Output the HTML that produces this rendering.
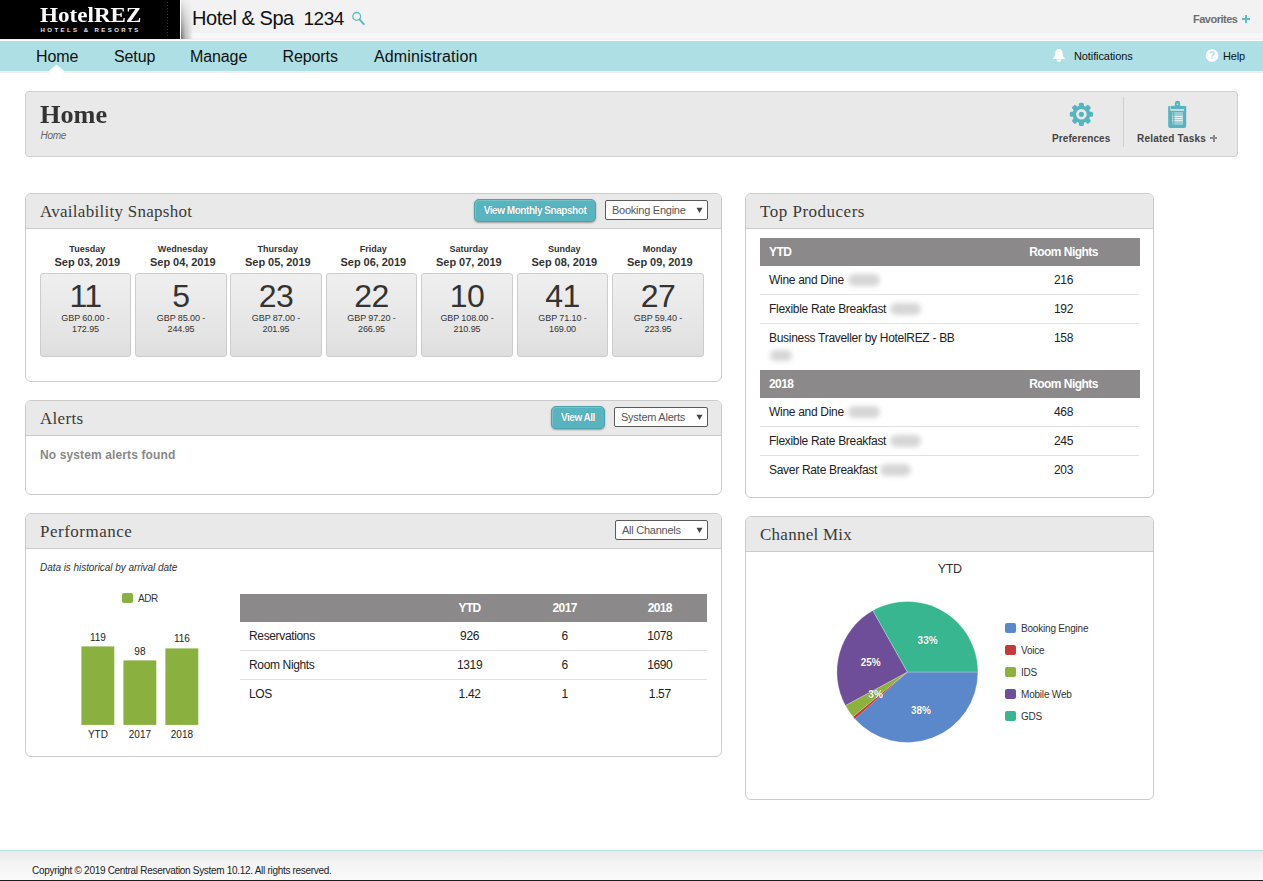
<!DOCTYPE html>
<html><head><meta charset="utf-8"><title>HotelREZ Home</title>
<style>
*{margin:0;padding:0}
html,body{width:1263px;height:881px;overflow:hidden;background:#fff;position:relative;font-family:"Liberation Sans",sans-serif}
</style></head><body>
<div style="position:absolute;left:0px;top:0px;width:1263px;height:33px;background:#f2f2f2"></div>
<div style="position:absolute;left:0px;top:33px;width:1263px;height:5px;background:#f7f7f7"></div>
<div style="position:absolute;left:0px;top:38px;width:1263px;height:2px;background:#f2f2f2"></div>
<div style="position:absolute;left:0px;top:40px;width:1263px;height:1px;background:#fff"></div>
<div style="position:absolute;left:180px;top:0px;width:1px;height:39px;background:#fff"></div>
<div style="position:absolute;left:181px;top:0px;width:12px;height:39px;background:linear-gradient(to right,rgba(0,0,0,.55),rgba(0,0,0,.25) 35%,rgba(0,0,0,0));-webkit-mask-image:linear-gradient(to bottom,rgba(0,0,0,.05),rgba(0,0,0,.5) 50%,#000)"></div>
<div style="position:absolute;left:0px;top:0px;width:180px;height:39px;background:#000"></div>
<div style="position:absolute;left:167px;top:2px;width:1px;height:35px;background:repeating-linear-gradient(#333 0,#333 1px,transparent 1px,transparent 3px)"></div>
<div style='position:absolute;left:40px;top:4.71px;font-family:"Liberation Serif",serif;font-size:21px;line-height:21px;color:#fff;font-weight:bold;font-style:normal;white-space:nowrap;transform:scaleX(1.1);transform-origin:0 0;'>HotelREZ</div>
<div style='position:absolute;left:40.5px;top:26.92px;font-family:"Liberation Sans",sans-serif;font-size:6px;line-height:6px;color:#e8e8e8;font-weight:bold;font-style:normal;white-space:nowrap;letter-spacing:2.45px;'>HOTELS &amp; RESORTS</div>
<div style='position:absolute;left:192px;top:8.07px;font-family:"Liberation Sans",sans-serif;font-size:20px;line-height:20px;color:#111;font-weight:normal;font-style:normal;white-space:nowrap;letter-spacing:-0.45px;'>Hotel &amp; Spa</div>
<div style='position:absolute;left:303.5px;top:8.92px;font-family:"Liberation Sans",sans-serif;font-size:19px;line-height:19px;color:#111;font-weight:normal;font-style:normal;white-space:nowrap;letter-spacing:-0.45px;'>1234</div>
<svg style="position:absolute;left:350px;top:10px" width="18" height="18" viewBox="0 0 18 18"><circle cx="6.7" cy="6.4" r="3.9" fill="none" stroke="#5bbcc6" stroke-width="1.3"/><line x1="9.5" y1="9.4" x2="13.8" y2="14.1" stroke="#5bbcc6" stroke-width="2.1" stroke-linecap="round"/></svg>
<div style='position:absolute;left:1193px;top:13.69px;font-family:"Liberation Sans",sans-serif;font-size:11px;line-height:11px;color:#6e6e6e;font-weight:bold;font-style:normal;white-space:nowrap;letter-spacing:-0.5px;'>Favorites</div>
<div style="position:absolute;left:1242.3px;top:18px;width:7.7px;height:1.8px;background:#5fbdc7"></div>
<div style="position:absolute;left:1245.25px;top:15.1px;width:1.8px;height:7.7px;background:#5fbdc7"></div>
<div style="position:absolute;left:0px;top:41px;width:1263px;height:30px;background:#aedfe4"></div>
<div style="position:absolute;left:0px;top:71px;width:1263px;height:2px;background:#efefef"></div>
<div style='position:absolute;left:36px;top:49.46px;font-family:"Liberation Sans",sans-serif;font-size:16px;line-height:16px;color:#111;font-weight:normal;font-style:normal;white-space:nowrap;letter-spacing:-0.1px;'>Home</div>
<div style='position:absolute;left:114px;top:49.46px;font-family:"Liberation Sans",sans-serif;font-size:16px;line-height:16px;color:#111;font-weight:normal;font-style:normal;white-space:nowrap;letter-spacing:-0.1px;'>Setup</div>
<div style='position:absolute;left:190px;top:49.46px;font-family:"Liberation Sans",sans-serif;font-size:16px;line-height:16px;color:#111;font-weight:normal;font-style:normal;white-space:nowrap;letter-spacing:-0.1px;'>Manage</div>
<div style='position:absolute;left:282.5px;top:49.46px;font-family:"Liberation Sans",sans-serif;font-size:16px;line-height:16px;color:#111;font-weight:normal;font-style:normal;white-space:nowrap;letter-spacing:-0.1px;'>Reports</div>
<div style='position:absolute;left:374px;top:49.46px;font-family:"Liberation Sans",sans-serif;font-size:16px;line-height:16px;color:#111;font-weight:normal;font-style:normal;white-space:nowrap;letter-spacing:0.15px;'>Administration</div>
<svg style="position:absolute;left:49px;top:64px" width="15" height="9" viewBox="0 0 15 9"><polygon points="0,7 7.5,0.7 15,7 15,9 0,9" fill="#fff" stroke="#fff" stroke-width="0.3" stroke-linejoin="round"/></svg>
<svg style="position:absolute;left:1051px;top:48px" width="16" height="16" viewBox="0 0 16 16"><path d="M7.9 1.1 C5.1 1.1 4.3 3 4.2 5.5 C4.1 8 3.2 9.4 1.9 10.5 L1.9 11.1 L13.9 11.1 L13.9 10.5 C12.6 9.4 11.7 8 11.6 5.5 C11.5 3 10.7 1.1 7.9 1.1 Z" fill="#fff"/><path d="M5.5 11.4 L10.3 11.4 C10.1 13 9.1 13.9 7.9 13.9 C6.7 13.9 5.7 13 5.5 11.4 Z" fill="#fff"/></svg>
<div style='position:absolute;left:1074px;top:50.69px;font-family:"Liberation Sans",sans-serif;font-size:11px;line-height:11px;color:#111;font-weight:normal;font-style:normal;white-space:nowrap;letter-spacing:-0.1px;'>Notifications</div>
<svg style="position:absolute;left:1205px;top:49px" width="14" height="14" viewBox="0 0 14 14"><circle cx="7" cy="6.5" r="6.3" fill="#fff"/><text x="7.1" y="10.3" text-anchor="middle" font-family="Liberation Sans" font-weight="bold" font-size="10" fill="#b4e0e5">?</text></svg>
<div style='position:absolute;left:1223px;top:50.69px;font-family:"Liberation Sans",sans-serif;font-size:11px;line-height:11px;color:#111;font-weight:normal;font-style:normal;white-space:nowrap;letter-spacing:-0.2px;'>Help</div>
<div style="position:absolute;left:25px;top:91px;width:1213px;height:66px;box-sizing:border-box;background:#e9e9e9;border:1px solid #d0d0d0;border-radius:4px"></div>
<div style='position:absolute;left:40px;top:101.66px;font-family:"Liberation Serif",serif;font-size:25px;line-height:25px;color:#333;font-weight:bold;font-style:normal;white-space:nowrap;transform:scaleX(1.05);transform-origin:0 0;'>Home</div>
<div style='position:absolute;left:40.5px;top:130.53px;font-family:"Liberation Sans",sans-serif;font-size:10px;line-height:10px;color:#666;font-weight:normal;font-style:italic;white-space:nowrap;letter-spacing:-0.3px;'>Home</div>
<svg style="position:absolute;left:0;top:0" width="1263" height="160"><rect x="-2.5" y="-11.6" width="5" height="6" rx="1.5" transform="translate(1081.4 114.3) rotate(0)" fill="#56b4bf"/><rect x="-2.5" y="-11.6" width="5" height="6" rx="1.5" transform="translate(1081.4 114.3) rotate(45)" fill="#56b4bf"/><rect x="-2.5" y="-11.6" width="5" height="6" rx="1.5" transform="translate(1081.4 114.3) rotate(90)" fill="#56b4bf"/><rect x="-2.5" y="-11.6" width="5" height="6" rx="1.5" transform="translate(1081.4 114.3) rotate(135)" fill="#56b4bf"/><rect x="-2.5" y="-11.6" width="5" height="6" rx="1.5" transform="translate(1081.4 114.3) rotate(180)" fill="#56b4bf"/><rect x="-2.5" y="-11.6" width="5" height="6" rx="1.5" transform="translate(1081.4 114.3) rotate(225)" fill="#56b4bf"/><rect x="-2.5" y="-11.6" width="5" height="6" rx="1.5" transform="translate(1081.4 114.3) rotate(270)" fill="#56b4bf"/><rect x="-2.5" y="-11.6" width="5" height="6" rx="1.5" transform="translate(1081.4 114.3) rotate(315)" fill="#56b4bf"/><circle cx="1081.4" cy="114.3" r="8.8" fill="#56b4bf"/><circle cx="1081.4" cy="114.3" r="5.3" fill="#e9e9e9"/><circle cx="1081.4" cy="114.3" r="2.6" fill="#56b4bf"/><rect x="1168.2" y="105.9" width="2.2" height="6" rx="0.6" fill="#56b4bf"/><rect x="1184" y="105.9" width="2.2" height="6" rx="0.6" fill="#56b4bf"/><path d="M1168.2 110.8 L1186.2 110.8 L1186.2 126 Q1186.2 128 1184.2 128 L1170.2 128 Q1168.2 128 1168.2 126 Z" fill="#56b4bf"/><rect x="1171" y="105.9" width="13" height="3.3" fill="#56b4bf"/><path d="M1174.9 107 L1174.9 103.3 Q1174.9 100.8 1177.5 100.8 Q1180.1 100.8 1180.1 103.3 L1180.1 107 Z" fill="#56b4bf"/><circle cx="1177.5" cy="104.3" r="0.8" fill="#d8eef0"/><rect x="1172.2" y="112" width="10.8" height="12.9" fill="#98ced4"/><rect x="1174.3" y="115.9" width="8.7" height="1.1" fill="#e4f2f3"/><rect x="1174.3" y="118" width="8.7" height="1.1" fill="#e4f2f3"/><rect x="1174.3" y="120.1" width="8.7" height="1.1" fill="#e4f2f3"/><rect x="1173.2" y="112" width="1.1" height="12.9" fill="#56b4bf"/><rect x="1172.3" y="115.9" width="0.9" height="1.1" fill="#e4f2f3"/><rect x="1172.3" y="118" width="0.9" height="1.1" fill="#e4f2f3"/><rect x="1172.3" y="120.1" width="0.9" height="1.1" fill="#e4f2f3"/></svg>
<div style='position:absolute;left:1052px;top:133.53px;font-family:"Liberation Sans",sans-serif;font-size:10px;line-height:10px;color:#444;font-weight:bold;font-style:normal;white-space:nowrap;letter-spacing:0.1px;'>Preferences</div>
<div style="position:absolute;left:1123px;top:97px;width:1px;height:50px;background:#cfcfcf"></div>
<div style='position:absolute;left:1137px;top:133.53px;font-family:"Liberation Sans",sans-serif;font-size:10px;line-height:10px;color:#444;font-weight:bold;font-style:normal;white-space:nowrap;letter-spacing:0.2px;'>Related Tasks</div>
<div style="position:absolute;left:1210px;top:137px;width:7px;height:2px;background:#8a8a8a"></div>
<div style="position:absolute;left:1212.5px;top:134.5px;width:2px;height:7px;background:#8a8a8a"></div>
<div style="position:absolute;left:25px;top:193px;width:697px;height:189px;box-sizing:border-box;background:#fff;border:1px solid #cbcbcb;border-radius:6px;overflow:hidden"></div>
<div style="position:absolute;left:26px;top:194px;width:695px;height:35px;background:#e9e9e9;border-radius:5px 5px 0 0"></div>
<div style="position:absolute;left:26px;top:228px;width:695px;height:1px;background:#cbcbcb"></div>
<div style='position:absolute;left:40px;top:203.36px;font-family:"Liberation Serif",serif;font-size:17px;line-height:17px;color:#3a3a3a;font-weight:normal;font-style:normal;white-space:nowrap;letter-spacing:0.27px;'>Availability Snapshot</div>
<div style="position:absolute;left:474px;top:199px;width:122px;height:23px;box-sizing:border-box;background:#58b4bf;border:1px solid #4aa3ae;border-radius:5px;box-shadow:0 1px 2px rgba(0,0,0,.35),inset 1px 1px 0 rgba(255,255,255,.18)"></div>
<div style='position:absolute;left:474.0px;width:122px;text-align:center;top:205.53px;font-family:"Liberation Sans",sans-serif;font-size:10px;line-height:10px;color:#fff;font-weight:bold;font-style:normal;white-space:nowrap;letter-spacing:-0.45px;text-shadow:0 0 1px rgba(0,60,70,.35);'>View Monthly Snapshot</div>
<div style="position:absolute;left:605px;top:200px;width:103px;height:20px;box-sizing:border-box;background:#fff;border:1px solid #5a5a5a;border-radius:2px"></div>
<div style='position:absolute;left:612px;top:204.69px;font-family:"Liberation Sans",sans-serif;font-size:11px;line-height:11px;color:#555;font-weight:normal;font-style:normal;white-space:nowrap;letter-spacing:-0.25px;'>Booking Engine</div>
<svg style="position:absolute;left:696px;top:206.5px" width="7" height="7" viewBox="0 0 7 7"><polygon points="0.5,0.8 6.5,0.8 3.5,6" fill="#444"/></svg>
<div style='position:absolute;left:39.8px;width:95px;text-align:center;top:245.38px;font-family:"Liberation Sans",sans-serif;font-size:9px;line-height:9px;color:#333;font-weight:bold;font-style:normal;white-space:nowrap;'>Tuesday</div>
<div style='position:absolute;left:39.8px;width:95px;text-align:center;top:257.19px;font-family:"Liberation Sans",sans-serif;font-size:11px;line-height:11px;color:#333;font-weight:bold;font-style:normal;white-space:nowrap;letter-spacing:-0.05px;'>Sep 03, 2019</div>
<div style="position:absolute;left:40px;top:273px;width:91px;height:84px;box-sizing:border-box;border:1px solid #cdcdcd;border-radius:3px;background:linear-gradient(#efefef,#e4e4e4 75%,#dedede)"></div>
<div style='position:absolute;left:40.0px;width:91px;text-align:center;top:279.91px;font-family:"Liberation Sans",sans-serif;font-size:32px;line-height:32px;color:#333;font-weight:normal;font-style:normal;white-space:nowrap;letter-spacing:-0.5px;'>11</div>
<div style='position:absolute;left:40.0px;width:91px;text-align:center;top:314.38px;font-family:"Liberation Sans",sans-serif;font-size:9px;line-height:9px;color:#333;font-weight:normal;font-style:normal;white-space:nowrap;letter-spacing:-0.1px;'>GBP 60.00 -</div>
<div style='position:absolute;left:40.0px;width:91px;text-align:center;top:325.38px;font-family:"Liberation Sans",sans-serif;font-size:9px;line-height:9px;color:#333;font-weight:normal;font-style:normal;white-space:nowrap;letter-spacing:-0.1px;'>172.95</div>
<div style='position:absolute;left:135.3px;width:95px;text-align:center;top:245.38px;font-family:"Liberation Sans",sans-serif;font-size:9px;line-height:9px;color:#333;font-weight:bold;font-style:normal;white-space:nowrap;'>Wednesday</div>
<div style='position:absolute;left:135.3px;width:95px;text-align:center;top:257.19px;font-family:"Liberation Sans",sans-serif;font-size:11px;line-height:11px;color:#333;font-weight:bold;font-style:normal;white-space:nowrap;letter-spacing:-0.05px;'>Sep 04, 2019</div>
<div style="position:absolute;left:135px;top:273px;width:92px;height:84px;box-sizing:border-box;border:1px solid #cdcdcd;border-radius:3px;background:linear-gradient(#efefef,#e4e4e4 75%,#dedede)"></div>
<div style='position:absolute;left:135.5px;width:91px;text-align:center;top:279.91px;font-family:"Liberation Sans",sans-serif;font-size:32px;line-height:32px;color:#333;font-weight:normal;font-style:normal;white-space:nowrap;letter-spacing:-0.5px;'>5</div>
<div style='position:absolute;left:135.5px;width:91px;text-align:center;top:314.38px;font-family:"Liberation Sans",sans-serif;font-size:9px;line-height:9px;color:#333;font-weight:normal;font-style:normal;white-space:nowrap;letter-spacing:-0.1px;'>GBP 85.00 -</div>
<div style='position:absolute;left:135.5px;width:91px;text-align:center;top:325.38px;font-family:"Liberation Sans",sans-serif;font-size:9px;line-height:9px;color:#333;font-weight:normal;font-style:normal;white-space:nowrap;letter-spacing:-0.1px;'>244.95</div>
<div style='position:absolute;left:230.3px;width:95px;text-align:center;top:245.38px;font-family:"Liberation Sans",sans-serif;font-size:9px;line-height:9px;color:#333;font-weight:bold;font-style:normal;white-space:nowrap;'>Thursday</div>
<div style='position:absolute;left:230.3px;width:95px;text-align:center;top:257.19px;font-family:"Liberation Sans",sans-serif;font-size:11px;line-height:11px;color:#333;font-weight:bold;font-style:normal;white-space:nowrap;letter-spacing:-0.05px;'>Sep 05, 2019</div>
<div style="position:absolute;left:230px;top:273px;width:92px;height:84px;box-sizing:border-box;border:1px solid #cdcdcd;border-radius:3px;background:linear-gradient(#efefef,#e4e4e4 75%,#dedede)"></div>
<div style='position:absolute;left:230.5px;width:91px;text-align:center;top:279.91px;font-family:"Liberation Sans",sans-serif;font-size:32px;line-height:32px;color:#333;font-weight:normal;font-style:normal;white-space:nowrap;letter-spacing:-0.5px;'>23</div>
<div style='position:absolute;left:230.5px;width:91px;text-align:center;top:314.38px;font-family:"Liberation Sans",sans-serif;font-size:9px;line-height:9px;color:#333;font-weight:normal;font-style:normal;white-space:nowrap;letter-spacing:-0.1px;'>GBP 87.00 -</div>
<div style='position:absolute;left:230.5px;width:91px;text-align:center;top:325.38px;font-family:"Liberation Sans",sans-serif;font-size:9px;line-height:9px;color:#333;font-weight:normal;font-style:normal;white-space:nowrap;letter-spacing:-0.1px;'>201.95</div>
<div style='position:absolute;left:325.8px;width:95px;text-align:center;top:245.38px;font-family:"Liberation Sans",sans-serif;font-size:9px;line-height:9px;color:#333;font-weight:bold;font-style:normal;white-space:nowrap;'>Friday</div>
<div style='position:absolute;left:325.8px;width:95px;text-align:center;top:257.19px;font-family:"Liberation Sans",sans-serif;font-size:11px;line-height:11px;color:#333;font-weight:bold;font-style:normal;white-space:nowrap;letter-spacing:-0.05px;'>Sep 06, 2019</div>
<div style="position:absolute;left:326px;top:273px;width:91px;height:84px;box-sizing:border-box;border:1px solid #cdcdcd;border-radius:3px;background:linear-gradient(#efefef,#e4e4e4 75%,#dedede)"></div>
<div style='position:absolute;left:326.0px;width:91px;text-align:center;top:279.91px;font-family:"Liberation Sans",sans-serif;font-size:32px;line-height:32px;color:#333;font-weight:normal;font-style:normal;white-space:nowrap;letter-spacing:-0.5px;'>22</div>
<div style='position:absolute;left:326.0px;width:91px;text-align:center;top:314.38px;font-family:"Liberation Sans",sans-serif;font-size:9px;line-height:9px;color:#333;font-weight:normal;font-style:normal;white-space:nowrap;letter-spacing:-0.1px;'>GBP 97.20 -</div>
<div style='position:absolute;left:326.0px;width:91px;text-align:center;top:325.38px;font-family:"Liberation Sans",sans-serif;font-size:9px;line-height:9px;color:#333;font-weight:normal;font-style:normal;white-space:nowrap;letter-spacing:-0.1px;'>266.95</div>
<div style='position:absolute;left:421.3px;width:95px;text-align:center;top:245.38px;font-family:"Liberation Sans",sans-serif;font-size:9px;line-height:9px;color:#333;font-weight:bold;font-style:normal;white-space:nowrap;'>Saturday</div>
<div style='position:absolute;left:421.3px;width:95px;text-align:center;top:257.19px;font-family:"Liberation Sans",sans-serif;font-size:11px;line-height:11px;color:#333;font-weight:bold;font-style:normal;white-space:nowrap;letter-spacing:-0.05px;'>Sep 07, 2019</div>
<div style="position:absolute;left:421px;top:273px;width:92px;height:84px;box-sizing:border-box;border:1px solid #cdcdcd;border-radius:3px;background:linear-gradient(#efefef,#e4e4e4 75%,#dedede)"></div>
<div style='position:absolute;left:421.5px;width:91px;text-align:center;top:279.91px;font-family:"Liberation Sans",sans-serif;font-size:32px;line-height:32px;color:#333;font-weight:normal;font-style:normal;white-space:nowrap;letter-spacing:-0.5px;'>10</div>
<div style='position:absolute;left:421.5px;width:91px;text-align:center;top:314.38px;font-family:"Liberation Sans",sans-serif;font-size:9px;line-height:9px;color:#333;font-weight:normal;font-style:normal;white-space:nowrap;letter-spacing:-0.1px;'>GBP 108.00 -</div>
<div style='position:absolute;left:421.5px;width:91px;text-align:center;top:325.38px;font-family:"Liberation Sans",sans-serif;font-size:9px;line-height:9px;color:#333;font-weight:normal;font-style:normal;white-space:nowrap;letter-spacing:-0.1px;'>210.95</div>
<div style='position:absolute;left:516.8px;width:95px;text-align:center;top:245.38px;font-family:"Liberation Sans",sans-serif;font-size:9px;line-height:9px;color:#333;font-weight:bold;font-style:normal;white-space:nowrap;'>Sunday</div>
<div style='position:absolute;left:516.8px;width:95px;text-align:center;top:257.19px;font-family:"Liberation Sans",sans-serif;font-size:11px;line-height:11px;color:#333;font-weight:bold;font-style:normal;white-space:nowrap;letter-spacing:-0.05px;'>Sep 08, 2019</div>
<div style="position:absolute;left:517px;top:273px;width:91px;height:84px;box-sizing:border-box;border:1px solid #cdcdcd;border-radius:3px;background:linear-gradient(#efefef,#e4e4e4 75%,#dedede)"></div>
<div style='position:absolute;left:517.0px;width:91px;text-align:center;top:279.91px;font-family:"Liberation Sans",sans-serif;font-size:32px;line-height:32px;color:#333;font-weight:normal;font-style:normal;white-space:nowrap;letter-spacing:-0.5px;'>41</div>
<div style='position:absolute;left:517.0px;width:91px;text-align:center;top:314.38px;font-family:"Liberation Sans",sans-serif;font-size:9px;line-height:9px;color:#333;font-weight:normal;font-style:normal;white-space:nowrap;letter-spacing:-0.1px;'>GBP 71.10 -</div>
<div style='position:absolute;left:517.0px;width:91px;text-align:center;top:325.38px;font-family:"Liberation Sans",sans-serif;font-size:9px;line-height:9px;color:#333;font-weight:normal;font-style:normal;white-space:nowrap;letter-spacing:-0.1px;'>169.00</div>
<div style='position:absolute;left:612.3px;width:95px;text-align:center;top:245.38px;font-family:"Liberation Sans",sans-serif;font-size:9px;line-height:9px;color:#333;font-weight:bold;font-style:normal;white-space:nowrap;'>Monday</div>
<div style='position:absolute;left:612.3px;width:95px;text-align:center;top:257.19px;font-family:"Liberation Sans",sans-serif;font-size:11px;line-height:11px;color:#333;font-weight:bold;font-style:normal;white-space:nowrap;letter-spacing:-0.05px;'>Sep 09, 2019</div>
<div style="position:absolute;left:612px;top:273px;width:92px;height:84px;box-sizing:border-box;border:1px solid #cdcdcd;border-radius:3px;background:linear-gradient(#efefef,#e4e4e4 75%,#dedede)"></div>
<div style='position:absolute;left:612.5px;width:91px;text-align:center;top:279.91px;font-family:"Liberation Sans",sans-serif;font-size:32px;line-height:32px;color:#333;font-weight:normal;font-style:normal;white-space:nowrap;letter-spacing:-0.5px;'>27</div>
<div style='position:absolute;left:612.5px;width:91px;text-align:center;top:314.38px;font-family:"Liberation Sans",sans-serif;font-size:9px;line-height:9px;color:#333;font-weight:normal;font-style:normal;white-space:nowrap;letter-spacing:-0.1px;'>GBP 59.40 -</div>
<div style='position:absolute;left:612.5px;width:91px;text-align:center;top:325.38px;font-family:"Liberation Sans",sans-serif;font-size:9px;line-height:9px;color:#333;font-weight:normal;font-style:normal;white-space:nowrap;letter-spacing:-0.1px;'>223.95</div>
<div style="position:absolute;left:25px;top:400px;width:697px;height:95px;box-sizing:border-box;background:#fff;border:1px solid #cbcbcb;border-radius:6px;overflow:hidden"></div>
<div style="position:absolute;left:26px;top:401px;width:695px;height:35px;background:#e9e9e9;border-radius:5px 5px 0 0"></div>
<div style="position:absolute;left:26px;top:435px;width:695px;height:1px;background:#cbcbcb"></div>
<div style='position:absolute;left:40px;top:410.36px;font-family:"Liberation Serif",serif;font-size:17px;line-height:17px;color:#3a3a3a;font-weight:normal;font-style:normal;white-space:nowrap;letter-spacing:0.3px;'>Alerts</div>
<div style="position:absolute;left:551px;top:406px;width:54px;height:23px;box-sizing:border-box;background:#58b4bf;border:1px solid #4aa3ae;border-radius:5px;box-shadow:0 1px 2px rgba(0,0,0,.35),inset 1px 1px 0 rgba(255,255,255,.18)"></div>
<div style='position:absolute;left:551.0px;width:54px;text-align:center;top:412.54px;font-family:"Liberation Sans",sans-serif;font-size:10px;line-height:10px;color:#fff;font-weight:bold;font-style:normal;white-space:nowrap;letter-spacing:-0.5px;text-shadow:0 0 1px rgba(0,60,70,.35);'>View All</div>
<div style="position:absolute;left:614px;top:407px;width:94px;height:20px;box-sizing:border-box;background:#fff;border:1px solid #5a5a5a;border-radius:2px"></div>
<div style='position:absolute;left:621px;top:411.69px;font-family:"Liberation Sans",sans-serif;font-size:11px;line-height:11px;color:#555;font-weight:normal;font-style:normal;white-space:nowrap;letter-spacing:-0.25px;'>System Alerts</div>
<svg style="position:absolute;left:696px;top:413.5px" width="7" height="7" viewBox="0 0 7 7"><polygon points="0.5,0.8 6.5,0.8 3.5,6" fill="#444"/></svg>
<div style='position:absolute;left:40px;top:448.84px;font-family:"Liberation Sans",sans-serif;font-size:12px;line-height:12px;color:#888;font-weight:bold;font-style:normal;white-space:nowrap;letter-spacing:0.12px;'>No system alerts found</div>
<div style="position:absolute;left:25px;top:513px;width:697px;height:244px;box-sizing:border-box;background:#fff;border:1px solid #cbcbcb;border-radius:6px;overflow:hidden"></div>
<div style="position:absolute;left:26px;top:514px;width:695px;height:35px;background:#e9e9e9;border-radius:5px 5px 0 0"></div>
<div style="position:absolute;left:26px;top:548px;width:695px;height:1px;background:#cbcbcb"></div>
<div style='position:absolute;left:40px;top:523.36px;font-family:"Liberation Serif",serif;font-size:17px;line-height:17px;color:#3a3a3a;font-weight:normal;font-style:normal;white-space:nowrap;letter-spacing:0.5px;'>Performance</div>
<div style="position:absolute;left:615px;top:520px;width:93px;height:20px;box-sizing:border-box;background:#fff;border:1px solid #5a5a5a;border-radius:2px"></div>
<div style='position:absolute;left:622px;top:524.69px;font-family:"Liberation Sans",sans-serif;font-size:11px;line-height:11px;color:#555;font-weight:normal;font-style:normal;white-space:nowrap;letter-spacing:-0.25px;'>All Channels</div>
<svg style="position:absolute;left:696px;top:526.5px" width="7" height="7" viewBox="0 0 7 7"><polygon points="0.5,0.8 6.5,0.8 3.5,6" fill="#444"/></svg>
<div style='position:absolute;left:40px;top:562.53px;font-family:"Liberation Sans",sans-serif;font-size:10px;line-height:10px;color:#333;font-weight:normal;font-style:italic;white-space:nowrap;letter-spacing:-0.05px;'>Data is historical by arrival date</div>
<div style="position:absolute;left:122px;top:593px;width:11px;height:10px;background:#8ab13f;border-radius:2px"></div>
<div style='position:absolute;left:138px;top:594.03px;font-family:"Liberation Sans",sans-serif;font-size:10px;line-height:10px;color:#333;font-weight:normal;font-style:normal;white-space:nowrap;letter-spacing:-0.4px;'>ADR</div>
<svg style="position:absolute;left:0;top:0" width="300" height="760"><rect x="81.4" y="646.4" width="32.9" height="78.49999999999997" fill="#8ab13f"/></svg>
<div style='position:absolute;left:77.9px;width:40px;text-align:center;top:632.53px;font-family:"Liberation Sans",sans-serif;font-size:10px;line-height:10px;color:#222;font-weight:normal;font-style:normal;white-space:nowrap;'>119</div>
<div style='position:absolute;left:77.9px;width:40px;text-align:center;top:730.24px;font-family:"Liberation Sans",sans-serif;font-size:10px;line-height:10px;color:#222;font-weight:normal;font-style:normal;white-space:nowrap;'>YTD</div>
<svg style="position:absolute;left:0;top:0" width="300" height="760"><rect x="123.4" y="660.4" width="32.9" height="64.49999999999997" fill="#8ab13f"/></svg>
<div style='position:absolute;left:119.9px;width:40px;text-align:center;top:646.53px;font-family:"Liberation Sans",sans-serif;font-size:10px;line-height:10px;color:#222;font-weight:normal;font-style:normal;white-space:nowrap;'>98</div>
<div style='position:absolute;left:119.9px;width:40px;text-align:center;top:730.24px;font-family:"Liberation Sans",sans-serif;font-size:10px;line-height:10px;color:#222;font-weight:normal;font-style:normal;white-space:nowrap;'>2017</div>
<svg style="position:absolute;left:0;top:0" width="300" height="760"><rect x="165.4" y="648.4" width="32.9" height="76.49999999999997" fill="#8ab13f"/></svg>
<div style='position:absolute;left:161.9px;width:40px;text-align:center;top:633.53px;font-family:"Liberation Sans",sans-serif;font-size:10px;line-height:10px;color:#222;font-weight:normal;font-style:normal;white-space:nowrap;'>116</div>
<div style='position:absolute;left:161.9px;width:40px;text-align:center;top:730.24px;font-family:"Liberation Sans",sans-serif;font-size:10px;line-height:10px;color:#222;font-weight:normal;font-style:normal;white-space:nowrap;'>2018</div>
<div style="position:absolute;left:240px;top:594px;width:467px;height:28px;background:#8b8989"></div>
<div style='position:absolute;left:429.6px;width:80px;text-align:center;top:601.84px;font-family:"Liberation Sans",sans-serif;font-size:12px;line-height:12px;color:#fff;font-weight:bold;font-style:normal;white-space:nowrap;letter-spacing:-0.6px;'>YTD</div>
<div style='position:absolute;left:524.7px;width:80px;text-align:center;top:601.84px;font-family:"Liberation Sans",sans-serif;font-size:12px;line-height:12px;color:#fff;font-weight:bold;font-style:normal;white-space:nowrap;letter-spacing:-0.6px;'>2017</div>
<div style='position:absolute;left:619.8px;width:80px;text-align:center;top:601.84px;font-family:"Liberation Sans",sans-serif;font-size:12px;line-height:12px;color:#fff;font-weight:bold;font-style:normal;white-space:nowrap;letter-spacing:-0.6px;'>2018</div>
<div style='position:absolute;left:249px;top:629.84px;font-family:"Liberation Sans",sans-serif;font-size:12px;line-height:12px;color:#222;font-weight:normal;font-style:normal;white-space:nowrap;letter-spacing:-0.35px;'>Reservations</div>
<div style='position:absolute;left:429.6px;width:80px;text-align:center;top:629.84px;font-family:"Liberation Sans",sans-serif;font-size:12px;line-height:12px;color:#222;font-weight:normal;font-style:normal;white-space:nowrap;letter-spacing:-0.35px;'>926</div>
<div style='position:absolute;left:524.7px;width:80px;text-align:center;top:629.84px;font-family:"Liberation Sans",sans-serif;font-size:12px;line-height:12px;color:#222;font-weight:normal;font-style:normal;white-space:nowrap;letter-spacing:-0.35px;'>6</div>
<div style='position:absolute;left:619.8px;width:80px;text-align:center;top:629.84px;font-family:"Liberation Sans",sans-serif;font-size:12px;line-height:12px;color:#222;font-weight:normal;font-style:normal;white-space:nowrap;letter-spacing:-0.35px;'>1078</div>
<div style='position:absolute;left:249px;top:658.84px;font-family:"Liberation Sans",sans-serif;font-size:12px;line-height:12px;color:#222;font-weight:normal;font-style:normal;white-space:nowrap;letter-spacing:-0.35px;'>Room Nights</div>
<div style='position:absolute;left:429.6px;width:80px;text-align:center;top:658.84px;font-family:"Liberation Sans",sans-serif;font-size:12px;line-height:12px;color:#222;font-weight:normal;font-style:normal;white-space:nowrap;letter-spacing:-0.35px;'>1319</div>
<div style='position:absolute;left:524.7px;width:80px;text-align:center;top:658.84px;font-family:"Liberation Sans",sans-serif;font-size:12px;line-height:12px;color:#222;font-weight:normal;font-style:normal;white-space:nowrap;letter-spacing:-0.35px;'>6</div>
<div style='position:absolute;left:619.8px;width:80px;text-align:center;top:658.84px;font-family:"Liberation Sans",sans-serif;font-size:12px;line-height:12px;color:#222;font-weight:normal;font-style:normal;white-space:nowrap;letter-spacing:-0.35px;'>1690</div>
<div style='position:absolute;left:249px;top:687.84px;font-family:"Liberation Sans",sans-serif;font-size:12px;line-height:12px;color:#222;font-weight:normal;font-style:normal;white-space:nowrap;letter-spacing:-0.35px;'>LOS</div>
<div style='position:absolute;left:429.6px;width:80px;text-align:center;top:687.84px;font-family:"Liberation Sans",sans-serif;font-size:12px;line-height:12px;color:#222;font-weight:normal;font-style:normal;white-space:nowrap;letter-spacing:-0.35px;'>1.42</div>
<div style='position:absolute;left:524.7px;width:80px;text-align:center;top:687.84px;font-family:"Liberation Sans",sans-serif;font-size:12px;line-height:12px;color:#222;font-weight:normal;font-style:normal;white-space:nowrap;letter-spacing:-0.35px;'>1</div>
<div style='position:absolute;left:619.8px;width:80px;text-align:center;top:687.84px;font-family:"Liberation Sans",sans-serif;font-size:12px;line-height:12px;color:#222;font-weight:normal;font-style:normal;white-space:nowrap;letter-spacing:-0.35px;'>1.57</div>
<div style="position:absolute;left:240px;top:650px;width:467px;height:1px;background:#e2e2e2"></div>
<div style="position:absolute;left:240px;top:679px;width:467px;height:1px;background:#e2e2e2"></div>
<div style="position:absolute;left:745px;top:193px;width:409px;height:305px;box-sizing:border-box;background:#fff;border:1px solid #cbcbcb;border-radius:6px;overflow:hidden"></div>
<div style="position:absolute;left:746px;top:194px;width:407px;height:35px;background:#e9e9e9;border-radius:5px 5px 0 0"></div>
<div style="position:absolute;left:746px;top:228px;width:407px;height:1px;background:#cbcbcb"></div>
<div style='position:absolute;left:760px;top:203.36px;font-family:"Liberation Serif",serif;font-size:17px;line-height:17px;color:#3a3a3a;font-weight:normal;font-style:normal;white-space:nowrap;letter-spacing:0.5px;'>Top Producers</div>
<div style="position:absolute;left:760px;top:238px;width:380px;height:28px;background:#8b8989"></div>
<div style='position:absolute;left:769px;top:245.84px;font-family:"Liberation Sans",sans-serif;font-size:12px;line-height:12px;color:#fff;font-weight:bold;font-style:normal;white-space:nowrap;letter-spacing:-0.6px;'>YTD</div>
<div style='position:absolute;left:1003.5px;width:120px;text-align:center;top:245.84px;font-family:"Liberation Sans",sans-serif;font-size:12px;line-height:12px;color:#fff;font-weight:bold;font-style:normal;white-space:nowrap;letter-spacing:-0.55px;'>Room Nights</div>
<div style='position:absolute;left:769px;top:273.84px;font-family:"Liberation Sans",sans-serif;font-size:12px;line-height:12px;color:#222;font-weight:normal;font-style:normal;white-space:nowrap;letter-spacing:-0.3px;'>Wine and Dine</div>
<div style='position:absolute;left:1033.5px;width:60px;text-align:center;top:273.84px;font-family:"Liberation Sans",sans-serif;font-size:12px;line-height:12px;color:#222;font-weight:normal;font-style:normal;white-space:nowrap;letter-spacing:-0.3px;'>216</div>
<div style="position:absolute;left:848px;top:274px;width:32px;height:12px;background:#c8c8c8;border-radius:6px;filter:blur(2.5px);opacity:.75"></div>
<div style='position:absolute;left:769px;top:302.84px;font-family:"Liberation Sans",sans-serif;font-size:12px;line-height:12px;color:#222;font-weight:normal;font-style:normal;white-space:nowrap;letter-spacing:-0.3px;'>Flexible Rate Breakfast</div>
<div style='position:absolute;left:1033.5px;width:60px;text-align:center;top:302.84px;font-family:"Liberation Sans",sans-serif;font-size:12px;line-height:12px;color:#222;font-weight:normal;font-style:normal;white-space:nowrap;letter-spacing:-0.3px;'>192</div>
<div style="position:absolute;left:890px;top:303px;width:31px;height:12px;background:#c8c8c8;border-radius:6px;filter:blur(2.5px);opacity:.75"></div>
<div style='position:absolute;left:769px;top:331.84px;font-family:"Liberation Sans",sans-serif;font-size:12px;line-height:12px;color:#222;font-weight:normal;font-style:normal;white-space:nowrap;letter-spacing:-0.3px;'>Business Traveller by HotelREZ - BB</div>
<div style='position:absolute;left:1033.5px;width:60px;text-align:center;top:331.84px;font-family:"Liberation Sans",sans-serif;font-size:12px;line-height:12px;color:#222;font-weight:normal;font-style:normal;white-space:nowrap;letter-spacing:-0.3px;'>158</div>
<div style="position:absolute;left:760px;top:294px;width:379px;height:1px;background:#e2e2e2"></div>
<div style="position:absolute;left:760px;top:323px;width:379px;height:1px;background:#e2e2e2"></div>
<div style="position:absolute;left:770px;top:350px;width:22px;height:11px;background:#c8c8c8;border-radius:6px;filter:blur(2.5px);opacity:.75"></div>
<div style="position:absolute;left:760px;top:370px;width:380px;height:28px;background:#8b8989"></div>
<div style='position:absolute;left:769px;top:377.84px;font-family:"Liberation Sans",sans-serif;font-size:12px;line-height:12px;color:#fff;font-weight:bold;font-style:normal;white-space:nowrap;letter-spacing:-0.6px;'>2018</div>
<div style='position:absolute;left:1003.5px;width:120px;text-align:center;top:377.84px;font-family:"Liberation Sans",sans-serif;font-size:12px;line-height:12px;color:#fff;font-weight:bold;font-style:normal;white-space:nowrap;letter-spacing:-0.55px;'>Room Nights</div>
<div style='position:absolute;left:769px;top:405.84px;font-family:"Liberation Sans",sans-serif;font-size:12px;line-height:12px;color:#222;font-weight:normal;font-style:normal;white-space:nowrap;letter-spacing:-0.3px;'>Wine and Dine</div>
<div style='position:absolute;left:1033.5px;width:60px;text-align:center;top:405.84px;font-family:"Liberation Sans",sans-serif;font-size:12px;line-height:12px;color:#222;font-weight:normal;font-style:normal;white-space:nowrap;letter-spacing:-0.3px;'>468</div>
<div style="position:absolute;left:848px;top:406px;width:32px;height:12px;background:#c8c8c8;border-radius:6px;filter:blur(2.5px);opacity:.75"></div>
<div style='position:absolute;left:769px;top:434.84px;font-family:"Liberation Sans",sans-serif;font-size:12px;line-height:12px;color:#222;font-weight:normal;font-style:normal;white-space:nowrap;letter-spacing:-0.3px;'>Flexible Rate Breakfast</div>
<div style='position:absolute;left:1033.5px;width:60px;text-align:center;top:434.84px;font-family:"Liberation Sans",sans-serif;font-size:12px;line-height:12px;color:#222;font-weight:normal;font-style:normal;white-space:nowrap;letter-spacing:-0.3px;'>245</div>
<div style="position:absolute;left:890px;top:435px;width:31px;height:12px;background:#c8c8c8;border-radius:6px;filter:blur(2.5px);opacity:.75"></div>
<div style='position:absolute;left:769px;top:463.84px;font-family:"Liberation Sans",sans-serif;font-size:12px;line-height:12px;color:#222;font-weight:normal;font-style:normal;white-space:nowrap;letter-spacing:-0.3px;'>Saver Rate Breakfast</div>
<div style='position:absolute;left:1033.5px;width:60px;text-align:center;top:463.84px;font-family:"Liberation Sans",sans-serif;font-size:12px;line-height:12px;color:#222;font-weight:normal;font-style:normal;white-space:nowrap;letter-spacing:-0.3px;'>203</div>
<div style="position:absolute;left:880px;top:464px;width:31px;height:12px;background:#c8c8c8;border-radius:6px;filter:blur(2.5px);opacity:.75"></div>
<div style="position:absolute;left:760px;top:426px;width:379px;height:1px;background:#e2e2e2"></div>
<div style="position:absolute;left:760px;top:455px;width:379px;height:1px;background:#e2e2e2"></div>
<div style="position:absolute;left:745px;top:516px;width:409px;height:284px;box-sizing:border-box;background:#fff;border:1px solid #cbcbcb;border-radius:6px;overflow:hidden"></div>
<div style="position:absolute;left:746px;top:517px;width:407px;height:35px;background:#e9e9e9;border-radius:5px 5px 0 0"></div>
<div style="position:absolute;left:746px;top:551px;width:407px;height:1px;background:#cbcbcb"></div>
<div style='position:absolute;left:760px;top:526.36px;font-family:"Liberation Serif",serif;font-size:17px;line-height:17px;color:#3a3a3a;font-weight:normal;font-style:normal;white-space:nowrap;letter-spacing:0.25px;'>Channel Mix</div>
<div style='position:absolute;left:919.7px;width:60px;text-align:center;top:562.92px;font-family:"Liberation Sans",sans-serif;font-size:12.5px;line-height:12.5px;color:#333;font-weight:normal;font-style:normal;white-space:nowrap;letter-spacing:-0.4px;'>YTD</div>
<svg style="position:absolute;left:0;top:0" width="1263" height="881"><path d="M907.4 672 L977.90 672.00 A70.5 70.5 0 0 1 854.84 718.99 Z" fill="#5b87cb" stroke="#fff" stroke-width="0.25" stroke-linejoin="round"/><path d="M907.4 672 L854.84 718.99 A70.5 70.5 0 0 1 853.00 716.84 Z" fill="#c53a3a" stroke="#fff" stroke-width="0" stroke-linejoin="round"/><path d="M907.4 672 L853.00 716.84 A70.5 70.5 0 0 1 845.38 705.53 Z" fill="#8cb13c" stroke="#fff" stroke-width="0.25" stroke-linejoin="round"/><path d="M907.4 672 L845.38 705.53 A70.5 70.5 0 0 1 872.90 610.52 Z" fill="#6f4e99" stroke="#fff" stroke-width="0.25" stroke-linejoin="round"/><path d="M907.4 672 L872.90 610.52 A70.5 70.5 0 0 1 977.90 672.00 Z" fill="#38b68f" stroke="#fff" stroke-width="0.25" stroke-linejoin="round"/></svg>
<div style='position:absolute;left:907.6px;width:40px;text-align:center;top:635.83px;font-family:"Liberation Sans",sans-serif;font-size:10px;line-height:10px;color:#fff;font-weight:bold;font-style:normal;white-space:nowrap;text-shadow:0 0 1px rgba(0,0,0,.25);'>33%</div>
<div style='position:absolute;left:850.7px;width:40px;text-align:center;top:657.83px;font-family:"Liberation Sans",sans-serif;font-size:10px;line-height:10px;color:#fff;font-weight:bold;font-style:normal;white-space:nowrap;text-shadow:0 0 1px rgba(0,0,0,.25);'>25%</div>
<div style='position:absolute;left:855.6px;width:40px;text-align:center;top:689.63px;font-family:"Liberation Sans",sans-serif;font-size:10px;line-height:10px;color:#fff;font-weight:bold;font-style:normal;white-space:nowrap;text-shadow:0 0 1px rgba(0,0,0,.25);'>3%</div>
<div style='position:absolute;left:900.9px;width:40px;text-align:center;top:705.83px;font-family:"Liberation Sans",sans-serif;font-size:10px;line-height:10px;color:#fff;font-weight:bold;font-style:normal;white-space:nowrap;text-shadow:0 0 1px rgba(0,0,0,.25);'>38%</div>
<div style="position:absolute;left:1005px;top:622.5px;width:11px;height:10.5px;background:#5b87cb;border-radius:2px"></div>
<div style='position:absolute;left:1021px;top:624.03px;font-family:"Liberation Sans",sans-serif;font-size:10px;line-height:10px;color:#333;font-weight:normal;font-style:normal;white-space:nowrap;letter-spacing:-0.2px;'>Booking Engine</div>
<div style="position:absolute;left:1005px;top:644.6px;width:11px;height:10.5px;background:#c53a3a;border-radius:2px"></div>
<div style='position:absolute;left:1021px;top:646.13px;font-family:"Liberation Sans",sans-serif;font-size:10px;line-height:10px;color:#333;font-weight:normal;font-style:normal;white-space:nowrap;letter-spacing:-0.2px;'>Voice</div>
<div style="position:absolute;left:1005px;top:666.7px;width:11px;height:10.5px;background:#8cb13c;border-radius:2px"></div>
<div style='position:absolute;left:1021px;top:668.24px;font-family:"Liberation Sans",sans-serif;font-size:10px;line-height:10px;color:#333;font-weight:normal;font-style:normal;white-space:nowrap;letter-spacing:-0.2px;'>IDS</div>
<div style="position:absolute;left:1005px;top:688.8px;width:11px;height:10.5px;background:#6f4e99;border-radius:2px"></div>
<div style='position:absolute;left:1021px;top:690.33px;font-family:"Liberation Sans",sans-serif;font-size:10px;line-height:10px;color:#333;font-weight:normal;font-style:normal;white-space:nowrap;letter-spacing:-0.2px;'>Mobile Web</div>
<div style="position:absolute;left:1005px;top:710.9px;width:11px;height:10.5px;background:#38b68f;border-radius:2px"></div>
<div style='position:absolute;left:1021px;top:712.43px;font-family:"Liberation Sans",sans-serif;font-size:10px;line-height:10px;color:#333;font-weight:normal;font-style:normal;white-space:nowrap;letter-spacing:-0.2px;'>GDS</div>
<div style="position:absolute;left:0px;top:850px;width:1263px;height:1px;background:#b9dfe6"></div>
<div style="position:absolute;left:0px;top:851px;width:1263px;height:29px;background:linear-gradient(#e9e9e9,#f4f4f4 45%,#fafafa)"></div>
<div style='position:absolute;left:32px;top:865.53px;font-family:"Liberation Sans",sans-serif;font-size:10px;line-height:10px;color:#222;font-weight:normal;font-style:normal;white-space:nowrap;letter-spacing:-0.3px;'>Copyright &copy; 2019 Central Reservation System 10.12. All rights reserved.</div>
<div style="position:absolute;left:0px;top:880px;width:1263px;height:1px;background:#1e1e1e"></div>
</body></html>
